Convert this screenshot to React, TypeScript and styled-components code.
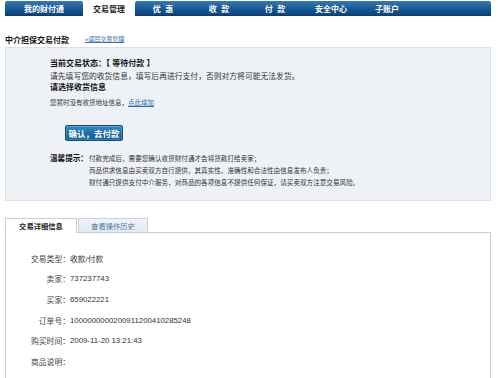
import React from "react";
import styled, { createGlobalStyle } from "styled-components";

const GlobalStyle = createGlobalStyle`
  body {
    margin: 0;
    background: #fff;
    font-family: "Liberation Sans", "Noto Sans CJK SC", sans-serif;
    color: #333;
  }
`;

const Page = styled.div`
  width: 486px;
  height: 378px;
  overflow: hidden;
  padding: 1px 9px 0 5px;
  box-sizing: content-box;
`;

const Nav = styled.div`
  display: flex;
  height: 15px;
`;

const NavTab = styled.div<{ active?: boolean; w: number }>`
  width: ${(p) => p.w}px;
  flex-shrink: 0;
  display: flex;
  align-items: center;
  justify-content: center;
  font-size: 8px;
  font-weight: 700;
  white-space: pre;
  color: ${(p) => (p.active ? "#222" : "#fff")};
  background: ${(p) =>
    p.active ? "#fff" : "linear-gradient(#3a78b2, #195891 55%, #0b457c)"};
  border-bottom: 1px solid ${(p) => (p.active ? "transparent" : "#0a3d6e")};
  border-radius: ${(p) => (p.active ? "0" : "2px 2px 0 0")};
  box-sizing: border-box;
`;

const NavBar = styled.div`
  flex: 1;
  display: flex;
  background: linear-gradient(#3a78b2, #195891 55%, #0b457c);
  border-bottom: 1px solid #0a3d6e;
  border-radius: 2px 2px 0 0;
  box-sizing: border-box;
`;

const NavItem = styled.div`
  width: 56px;
  display: flex;
  align-items: center;
  justify-content: center;
  color: #fff;
  font-size: 8px;
  font-weight: 700;
  white-space: pre;
`;

const TitleRow = styled.div`
  display: flex;
  align-items: center;
  height: 16px;
  margin-top: 15px;
`;

const Title = styled.div`
  font-size: 8px;
  font-weight: 700;
  color: #111;
`;

const BackLink = styled.a`
  margin-left: 16px;
  font-size: 6px;
  color: #3b73a8;
  text-decoration: underline;
  margin-top: -2px;
`;

const Panel = styled.div`
  background: #eef2f6;
  border: 1px solid #d9dfe6;
  padding: 10px 0 11px 44px;
`;

const Line = styled.div<{ bold?: boolean; size?: number; gap?: number }>`
  font-size: ${(p) => p.size ?? 8}px;
  font-weight: ${(p) => (p.bold ? 700 : 400)};
  line-height: 11px;
  margin-top: ${(p) => p.gap ?? 0}px;
  color: ${(p) => (p.bold ? "#111" : "#333")};
`;

const InlineLink = styled.a`
  color: #2f6ca6;
  text-decoration: underline;
`;

const PayButton = styled.button`
  display: block;
  margin: 17px 0 0 15px;
  width: 58px;
  height: 16px;
  padding: 0;
  border: 1px solid #0e4e80;
  border-radius: 2px;
  background: linear-gradient(#3a8cc2, #1d6ea6 50%, #135d92);
  box-shadow: inset 0 0 0 1px rgba(255, 255, 255, 0.2);
  color: #fff;
  font-family: inherit;
  font-size: 8.5px;
  font-weight: 700;
`;

const Tips = styled.div`
  display: grid;
  grid-template-columns: 39px auto;
  margin-top: 12px;
  font-size: 6.6px;
  line-height: 12px;
  color: #333;
`;

const TipLabel = styled.div`
  font-size: 7.6px;
  font-weight: 700;
  color: #111;
`;

const Tabs = styled.div`
  display: flex;
  gap: 1px;
  margin-top: 17px;
  height: 15px;
`;

const Tab = styled.div<{ active?: boolean; w: number }>`
  width: ${(p) => p.w}px;
  box-sizing: border-box;
  display: flex;
  align-items: center;
  justify-content: center;
  font-size: 7.3px;
  font-weight: ${(p) => (p.active ? 700 : 400)};
  color: ${(p) => (p.active ? "#222" : "#4f7aa3")};
  background: ${(p) => (p.active ? "#fff" : "linear-gradient(#f0f4f8, #e2e9f0)")};
  border: 1px solid ${(p) => (p.active ? "#c9cfd6" : "#c6d2dd")};
  border-bottom: ${(p) => (p.active ? "1px solid #fff" : "1px solid #c9cfd6")};
  position: relative;
  z-index: 1;
`;

const Detail = styled.div`
  margin-top: -1px;
  border: 1px solid #c9cfd6;
  border-bottom: none;
  height: 160px;
  box-sizing: border-box;
  padding-top: 15px;
  display: grid;
  grid-template-columns: 64px auto;
  grid-auto-rows: 20.6px;
  align-content: start;
  align-items: center;
  font-size: 7.8px;
`;

const Label = styled.div`
  text-align: right;
  color: #444;
`;

const Value = styled.div`
  color: #333;
`;

const details: [string, string][] = [
  ["交易类型：", "收款/付款"],
  ["卖家：", "737237743"],
  ["买家：", "659022221"],
  ["订单号：", "1000000000200911200410285248"],
  ["购买时间：", "2009-11-20 13:21:43"],
  ["商品说明：", ""],
];

export default function App() {
  return (
    <>
      <GlobalStyle />
      <Page>
        <Nav>
          <NavTab w={78}>我的财付通</NavTab>
          <NavTab w={52} active>
            交易管理
          </NavTab>
          <NavBar>
            <NavItem>优  惠</NavItem>
            <NavItem>收  款</NavItem>
            <NavItem>付  款</NavItem>
            <NavItem>安全中心</NavItem>
            <NavItem>子账户</NavItem>
          </NavBar>
        </Nav>

        <TitleRow>
          <Title>中介担保交易付款</Title>
          <BackLink>»返回交易管理</BackLink>
        </TitleRow>

        <Panel>
          <Line bold>当前交易状态：【 等待付款 】</Line>
          <Line gap={2} size={7.8}>
            请先填写您的收货信息，填写后再进行支付，否则对方将可能无法发货。
          </Line>
          <Line bold>请选择收货信息</Line>
          <Line size={6.5} gap={4}>
            您暂时没有收货地址信息，<InlineLink>点此增加</InlineLink>
          </Line>
          <PayButton>确认，去付款</PayButton>
          <Tips>
            <TipLabel>温馨提示：</TipLabel>
            <div>付款完成后，需要您确认收货财付通才会将货款打给卖家；</div>
            <div />
            <div>商品供求信息由买卖双方自行提供，其真实性、准确性和合法性由信息发布人负责；</div>
            <div />
            <div>财付通只提供支付中介服务，对商品的各项信息不提供任何保证，请买卖双方注意交易风险。</div>
          </Tips>
        </Panel>

        <Tabs>
          <Tab w={72} active>
            交易详细信息
          </Tab>
          <Tab w={70}>查看操作历史</Tab>
        </Tabs>
        <Detail>
          {details.map(([k, v]) => (
            <React.Fragment key={k}>
              <Label>{k}</Label>
              <Value>{v}</Value>
            </React.Fragment>
          ))}
        </Detail>
      </Page>
    </>
  );
}
